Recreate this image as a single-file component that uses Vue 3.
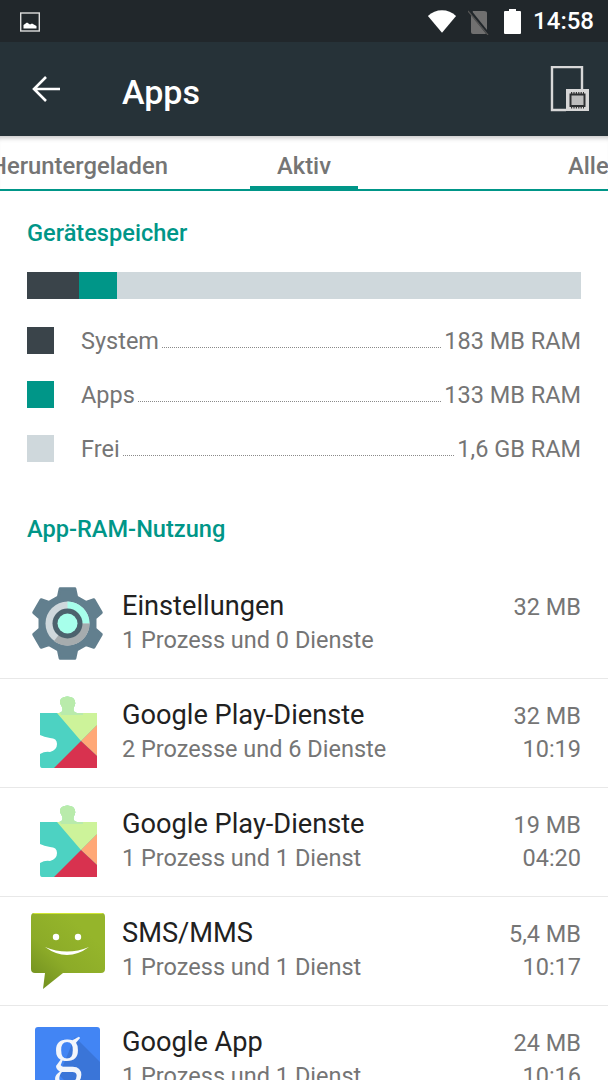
<template>
  <div class="screen">
    <div class="statusbar">
      <svg class="notif" width="20" height="22" viewBox="0 0 20 22">
        <rect x="0.700" y="2" width="18.600" height="18" fill="none" stroke="#ddd" stroke-width="1.400" />
        <path d="M3.500 17.500 V14 L7 11.500 L10 13.500 L12 12.500 L16.500 15 V17.500 Z" fill="#fff" />
      </svg>
      <div class="status-right">
        <svg width="30" height="25" viewBox="0 0 32 26">
          <path d="M1 7 C9 -1 23 -1 31 7 L16 25 Z" fill="#fff" />
        </svg>
        <svg class="sim" width="22" height="26" viewBox="0 0 22 26">
          <path d="M5 2 H16 Q19 2 19 4 V23 Q19 25 17 25 H5 Q3 25 3 23 V6 Z" fill="#707070" />
          <path d="M1 1 L21 26" stroke="#21272b" stroke-width="3" />
          <path d="M0 2 L20 26" stroke="#555" stroke-width="1.200" />
        </svg>
        <svg class="batt" width="17" height="26" viewBox="0 0 17 26">
          <path d="M5 1 H12 V3 H16 Q17 3 17 4 V25 Q17 26 16 26 H1 Q0 26 0 25 V4 Q0 3 1 3 H5 Z" fill="#fff" />
        </svg>
        <span class="clock">14:58</span>
      </div>
    </div>

    <div class="toolbar">
      <svg class="back" width="29" height="28" viewBox="0 0 29 28">
        <path d="M28 14 H3 M14 2 L2 14 L14 26" fill="none" stroke="#fff" stroke-width="2.600" />
      </svg>
      <span class="title">Apps</span>
      <svg class="mem" width="40" height="46" viewBox="0 0 40 46">
        <path d="M16 44 H2 V1 H32 V23" fill="none" stroke="#d8d8d8" stroke-width="2.400" />
        <rect x="16" y="23" width="23" height="22" fill="#d6d6d6" />
        <rect x="20.500" y="28.500" width="14" height="11.500" fill="#bdbdbd" stroke="#2c2f31" stroke-width="2" />
        <path d="M21 27 H34 M21 41.500 H34" stroke="#333" stroke-width="2" stroke-dasharray="1.200 1.200" />
      </svg>
    </div>

    <div class="tabs">
      <div class="tab tab-left"><span>Heruntergeladen</span></div>
      <div class="tab tab-active"><span>Aktiv</span></div>
      <div class="tab tab-right"><span>Alle</span></div>
    </div>

    <div class="content">
      <h2 class="section-head">Gerätespeicher</h2>
      <div class="bar">
        <div class="seg seg-sys"></div>
        <div class="seg seg-apps"></div>
        <div class="seg seg-free"></div>
      </div>
      <div class="legend">
        <div v-for="item in legend" :key="item.label" class="legend-row">
          <div class="swatch" :class="item.cls"></div>
          <span class="legend-label">{{ item.label }}</span>
          <span class="leader"></span>
          <span class="legend-value">{{ item.value }}</span>
        </div>
      </div>
      <h2 class="section-head ram-head">App-RAM-Nutzung</h2>
    </div>

    <div class="list">
      <div v-for="app in apps" :key="app.sub + app.time + app.size" class="row">
        <svg v-if="app.icon === 'gear'" class="icon" viewBox="0 0 80 80">
          <path :d="gearPath" fill="#627f8e" stroke="#627f8e" stroke-width="3" stroke-linejoin="round" />
          <circle cx="40.500" cy="39.500" r="22" fill="#cfd8dc" />
          <path d="M40.500 17.500 A22 22 0 0 1 62.500 39.500 H40.500 Z" fill="#a7ffeb" />
          <path d="M62.500 39.500 A22 22 0 0 1 27 57 L40.500 39.500 Z" fill="#a6acae" />
          <circle cx="40.500" cy="39.500" r="15" fill="#4c626d" />
          <circle cx="40.500" cy="39.500" r="10" fill="#a7ffeb" />
        </svg>

        <svg v-else-if="app.icon === 'puzzle'" class="icon" viewBox="0 0 80 80">
          <defs>
            <clipPath id="pz">
              <path d="M13 20 H32 Q37 19 35 14 Q31 8 35 5 Q40 2 46 5 Q50 9 47 14 Q45 19 50 20 H70 V75 H15 Q13 75 13 72 V61 Q18 58 23 59 Q30 57 30 51 Q30 45 23 45 Q17 44 13 42 Z" />
            </clipPath>
          </defs>
          <g clip-path="url(#pz)">
            <rect x="0" y="0" width="80" height="80" fill="#4dd2c2" />
            <polygon points="30,20 27,0 80,0 80,27 69,33 54,48" fill="#cdf39a" />
            <polygon points="27,0 56,0 56,22 34,22" fill="#b9ebab" />
            <polygon points="70,32 54,48 70,63" fill="#ffa877" />
            <polygon points="54,48 70,63 70,80 22,80" fill="#d8324f" />
          </g>
        </svg>

        <svg v-else-if="app.icon === 'chat'" class="icon" viewBox="0 0 80 80">
          <defs>
            <linearGradient id="chatg" x1="0" y1="1" x2="0.700" y2="0.200">
              <stop offset="0" stop-color="#6c8a1e" />
              <stop offset="0.500" stop-color="#8cab28" />
              <stop offset="1" stop-color="#95b52b" />
            </linearGradient>
          </defs>
          <path d="M7 2 H75 Q78 2 78 6 V58 Q78 62 74 62 H36 L16 78 L18 62 H8 Q4 62 4 58 V6 Q4 2 7 2 Z" fill="url(#chatg)" />
          <path d="M6 3 Q6 2 8 2 H74 Q76 2 76 3 Z" fill="#cfe632" />
          <circle cx="29" cy="26" r="3.200" fill="#fff" />
          <circle cx="51" cy="26" r="3.200" fill="#fff" />
          <path d="M18 36 Q40 45 62 36 Q40 52 18 36 Z" fill="#fff" />
        </svg>

        <svg v-else class="icon" viewBox="0 0 80 80">
          <rect x="8" y="7" width="65" height="66" rx="3" fill="#4285f4" />
          <polygon points="48,17 73,42 73,73 50,73 32,55" fill="#3a75d8" />
          <text class="g-glyph" transform="translate(25.500 52) scale(0.880 1)" font-size="68" fill="#f2f5fb">g</text>
        </svg>

        <div class="row-text">
          <div class="app-name">{{ app.name }}</div>
          <div class="app-sub">{{ app.sub }}</div>
        </div>
        <div class="row-meta">
          <div class="app-size">{{ app.size }}</div>
          <div v-if="app.time" class="app-time">{{ app.time }}</div>
        </div>
      </div>
    </div>
  </div>
</template>

<script setup>
const legend = [
  { label: 'System', value: '183 MB RAM', cls: 'seg-sys' },
  { label: 'Apps', value: '133 MB RAM', cls: 'seg-apps' },
  { label: 'Frei', value: '1,6 GB RAM', cls: 'seg-free' }
]

const apps = [
  { icon: 'gear', name: 'Einstellungen', sub: '1 Prozess und 0 Dienste', size: '32 MB', time: '' },
  { icon: 'puzzle', name: 'Google Play-Dienste', sub: '2 Prozesse und 6 Dienste', size: '32 MB', time: '10:19' },
  { icon: 'puzzle', name: 'Google Play-Dienste', sub: '1 Prozess und 1 Dienst', size: '19 MB', time: '04:20' },
  { icon: 'chat', name: 'SMS/MMS', sub: '1 Prozess und 1 Dienst', size: '5,4 MB', time: '10:17' },
  { icon: 'g', name: 'Google App', sub: '1 Prozess und 1 Dienst', size: '24 MB', time: '10:16' }
]

// six sloped teeth round the settings cog
const gearPath = (() => {
  const pt = (r, deg) => {
    const a = (deg - 90) * Math.PI / 180
    return `${(40.5 + r * Math.cos(a)).toFixed(2)} ${(39.5 + r * Math.sin(a)).toFixed(2)}`
  }
  let d = ''
  for (let t = 0; t < 6; t++) {
    const c = t * 60
    d += `${t ? 'L' : 'M'}${pt(28, c - 19)} L${pt(35.5, c - 12)} L${pt(35.5, c + 12)} L${pt(28, c + 19)} `
  }
  return d + 'Z'
})()
</script>

<style>
html, body {
  margin: 0;
  background: #fff;
}
</style>

<style scoped>
.screen {
  width: 608px;
  height: 1080px;
  overflow: hidden;
  background: #fff;
  font-family: Roboto, sans-serif;
}

.statusbar {
  height: 42px;
  background: #21272b;
  display: flex;
  align-items: center;
  justify-content: space-between;
  padding: 0 14px 0 20px;
}
.notif { margin-top: 1px; }
.status-right {
  display: flex;
  align-items: center;
}
.status-right svg { display: block; }
.sim { margin-left: 11px; margin-top: 1px; }
.batt { margin-left: 14px; margin-top: -1px; }
.clock {
  margin-left: 12px;
  color: #fff;
  font-size: 24px;
  font-weight: 500;
}

.toolbar {
  height: 94px;
  background: #263238;
  display: flex;
  align-items: center;
  padding: 0 18px 0 32px;
}
.title {
  margin-left: 61px;
  margin-top: 6px;
  color: #fff;
  font-size: 34px;
  font-weight: 500;
  flex: 1;
}

.tabs {
  height: 55px;
  display: grid;
  grid-template-columns: 250px 108px 250px;
  border-bottom: 2px solid #009688;
  box-sizing: border-box;
  box-shadow: inset 0 6px 5px -4px #c4c4c4;
  overflow: hidden;
  color: #757575;
  font-size: 23.800px;
  font-weight: 500;
}
.tab {
  display: flex;
  align-items: center;
  white-space: nowrap;
  padding-top: 6px;
  box-sizing: border-box;
}
.tab-left {
  justify-content: flex-end;
  padding-right: 82px;
}
.tab-active {
  justify-content: center;
  padding-top: 10px;
  border-bottom: 3px solid #009688;
}
.tab-right {
  padding-left: 210px;
}

.content {
  padding: 0 27px;
}
.section-head {
  margin: 0;
  color: #009688;
  font-size: 23.600px;
  font-weight: 500;
  line-height: 28px;
  padding-top: 28px;
}
.bar {
  display: flex;
  height: 27px;
  margin-top: 25px;
}
.seg-sys { background: #3a444a; }
.seg-apps { background: #009688; }
.seg-free { background: #cfd8dc; }
.bar .seg-sys { width: 52px; }
.bar .seg-apps { width: 38px; }
.bar .seg-free { flex: 1; }

.legend {
  margin-top: 14px;
}
.legend-row {
  display: flex;
  align-items: center;
  height: 54px;
  font-size: 23.500px;
  color: #757575;
}
.legend-label,
.legend-value {
  padding-top: 1px;
}
.swatch {
  width: 27px;
  height: 27px;
  margin-right: 27px;
}
.leader {
  flex: 1;
  align-self: flex-end;
  margin: 0 3px 19px 3px;
  border-bottom: 1px dotted #8a8a8a;
}
.ram-head {
  padding-top: 40px;
}

.list {
  margin-top: 27px;
}
.row {
  height: 108px;
  border-bottom: 1px solid #e8e8e8;
  display: flex;
  align-items: center;
  padding: 0 27px;
}
.icon {
  width: 80px;
  height: 80px;
  flex: none;
  margin-right: 15px;
}
.g-glyph {
  font-family: "Liberation Serif", serif;
}
.row-text {
  flex: 1;
  min-width: 0;
  padding-bottom: 5px;
}
.app-name {
  font-size: 27.200px;
  line-height: 36px;
  color: #212121;
}
.app-sub {
  font-size: 23.500px;
  line-height: 32px;
  color: #757575;
}
.row-meta {
  align-self: flex-start;
  padding-top: 19px;
  text-align: right;
  font-size: 23.500px;
  color: #757575;
  line-height: 36px;
}
.app-time {
  line-height: 30px;
}
</style>
